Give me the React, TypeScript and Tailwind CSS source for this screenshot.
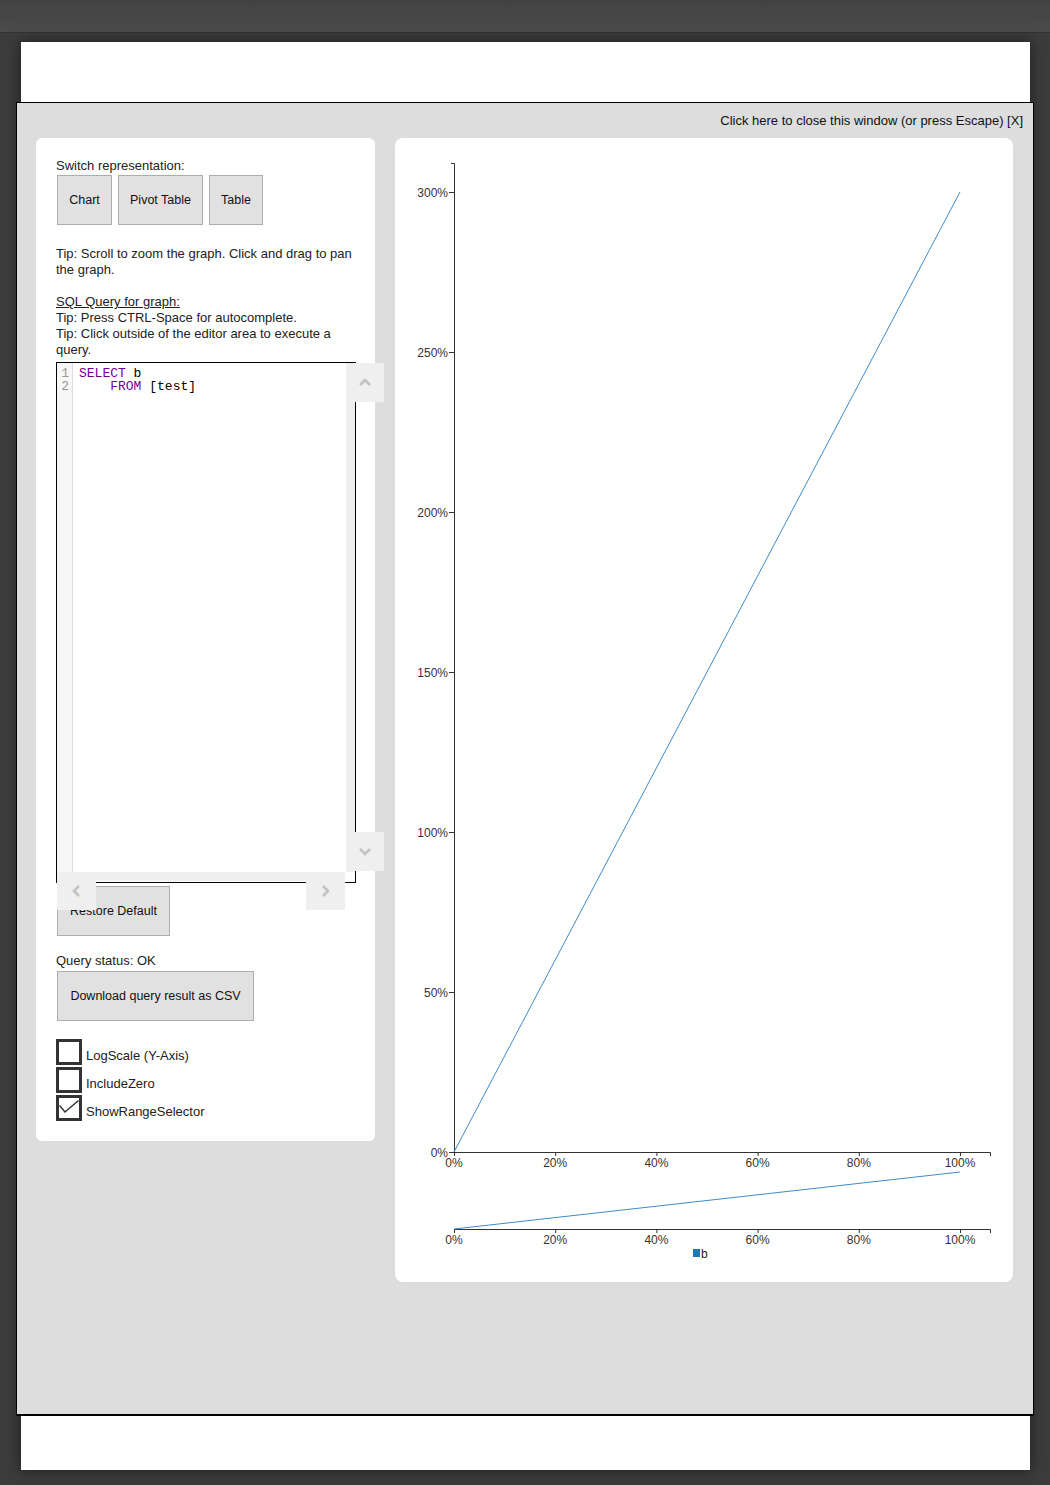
const yTicks = [0, 50, 100, 150, 200, 250, 300];
const xTicks = [0, 20, 40, 60, 80, 100];

const yPos = (v: number) => 1014 - v * 3.2;
const xPos = (v: number) => 59 + v * 5.06;

function Chevron({ dir }: { dir: 'up' | 'down' | 'left' | 'right' }) {
  const pts = {
    up: '1,8 6,3 11,8',
    down: '1,3 6,8 11,3',
    left: '8,1 3,6 8,11',
    right: '3,1 8,6 3,11',
  }[dir];
  return (
    <svg width="12" height="12" viewBox="0 0 12 12">
      <polyline points={pts} fill="none" stroke="#c2c2c2" strokeWidth="2.6" />
    </svg>
  );
}

function GrayButton({ children, className = '' }: { children: React.ReactNode; className?: string }) {
  return (
    <button className={`h-[50px] bg-[#e1e1e1] border border-[#adadad] text-[12.5px] text-[#111] text-center ${className}`}>
      {children}
    </button>
  );
}

function Check({ label, checked }: { label: string; checked?: boolean }) {
  return (
    <div className="flex items-end gap-[4px]">
      <div className="w-[26px] h-[26px] border-[3px] border-[#333] bg-white">
        {checked && (
          <svg width="20" height="20" viewBox="0 0 20 20">
            <polyline points="0.5,7.5 6,14 19.5,2.5" fill="none" stroke="#333" strokeWidth="1.5" />
          </svg>
        )}
      </div>
      <span className="leading-[16px] mb-[1px]">{label}</span>
    </div>
  );
}

function SqlEditor() {
  return (
    <div className="relative w-[300px] h-[521px] border border-black bg-white">
      {/* gutter */}
      <div className="absolute left-0 top-0 w-[16px] h-[509px] bg-[#f7f7f7] border-r border-[#dddddd]" />
      <div className="relative flex pt-[4px] font-['Liberation_Mono','Courier_New',monospace] text-[13px] leading-[13px]">
        <div className="w-[16px] pr-[4px] text-right text-[#999]">
          <div>1</div>
          <div>2</div>
        </div>
        <div className="pl-[6px] whitespace-pre text-black">
          <div>
            <span className="text-[#770088]">SELECT</span> b
          </div>
          <div>
            {'    '}
            <span className="text-[#770088]">FROM</span> [test]
          </div>
        </div>
      </div>
      {/* scrollbar tracks */}
      <div className="absolute right-0 top-0 w-[9px] h-[509px] bg-[#efefef]" />
      <div className="absolute left-0 top-[509px] w-[288px] h-[9px] bg-[#efefef]" />
      {/* scrollbar buttons */}
      <div className="absolute left-[289px] top-0 w-[38px] h-[39px] bg-[#efefef] flex items-center justify-center z-10">
        <Chevron dir="up" />
      </div>
      <div className="absolute left-[289px] top-[469px] w-[38px] h-[39px] bg-[#efefef] flex items-center justify-center z-10">
        <Chevron dir="down" />
      </div>
      <div className="absolute left-0 top-[509px] w-[39px] h-[38px] bg-[#efefef] flex items-center justify-center z-10">
        <Chevron dir="left" />
      </div>
      <div className="absolute left-[249px] top-[509px] w-[39px] h-[38px] bg-[#efefef] flex items-center justify-center z-10">
        <Chevron dir="right" />
      </div>
    </div>
  );
}

function Chart() {
  return (
    <svg width="618" height="1144" viewBox="0 0 618 1144" className="block">
      <g fontFamily="'Liberation Sans', Arial, sans-serif" fontSize="12" fill="#333">
        {/* y axis */}
        <path d="M56,25.5H59.5V1014.5" fill="none" stroke="#333" />
        {yTicks.map((v) => (
          <g key={`y${v}`}>
            <line x1="54" x2="59" y1={yPos(v) + 0.5} y2={yPos(v) + 0.5} stroke="#333" />
            <text x="53" y={yPos(v) + 5} textAnchor="end">
              {v}%
            </text>
          </g>
        ))}
        {/* x axis */}
        <path d="M59,1014.5H595.5V1018" fill="none" stroke="#333" />
        {xTicks.map((v) => (
          <g key={`x${v}`}>
            <line x1={xPos(v) + 0.5} x2={xPos(v) + 0.5} y1="1014" y2="1018" stroke="#333" />
            <text x={xPos(v)} y="1029" textAnchor="middle">
              {v}%
            </text>
          </g>
        ))}
        <line x1="59" y1="1014" x2="565" y2="54" stroke="#3d8bcb" strokeWidth="1" />

        {/* range selector */}
        <path d="M59,1091.5H595.5V1095" fill="none" stroke="#333" />
        {xTicks.map((v) => (
          <g key={`r${v}`}>
            <line x1={xPos(v) + 0.5} x2={xPos(v) + 0.5} y1="1091" y2="1095" stroke="#333" />
            <text x={xPos(v)} y="1106" textAnchor="middle">
              {v}%
            </text>
          </g>
        ))}
        <line x1="59" y1="1091" x2="565" y2="1034" stroke="#3d8bcb" strokeWidth="1" />

        {/* legend */}
        <rect x="298" y="1111" width="7" height="8" fill="#1f77b4" />
        <text x="306" y="1120" fill="#222">
          b
        </text>
      </g>
    </svg>
  );
}

export default function App() {
  return (
    <div className="min-h-[1485px] bg-[#3c3c3c] font-['Liberation_Sans',Arial,sans-serif] text-[13px] text-[#222]">
      <div className="h-[33px] bg-gradient-to-b from-[#424242] to-[#4b4b4b] border-b border-[#333]" />
      <div className="ml-[21px] mt-[9px] w-[1009px] bg-white shadow-[0_0_14px_rgba(0,0,0,0.55)] flex flex-col">
        <div className="h-[60px]" />
        <div className="-ml-[5px] w-[1018px] h-[1314px] bg-[#dddddd] border border-black border-b-2 flex flex-col">
          <div className="h-[35px] flex items-center justify-end pr-[10px] pt-[1px] text-[#111] leading-[16px]">
            Click here to close this window (or press Escape) [X]
          </div>
          <div className="flex items-start gap-[20px] pl-[19px]">
            {/* left controls */}
            <div className="w-[339px] bg-white rounded-[6px] pl-[20px] pr-[14px] pt-[20px] pb-[20px] leading-[16px]">
              <div>Switch representation:</div>
              <div className="flex gap-[6px] ml-[1px] mt-[1px]">
                <GrayButton className="w-[55px]">Chart</GrayButton>
                <GrayButton className="w-[85px]">Pivot Table</GrayButton>
                <GrayButton className="w-[54px]">Table</GrayButton>
              </div>
              <p className="mt-[21px]">Tip: Scroll to zoom the graph. Click and drag to pan the graph.</p>
              <div className="mt-[16px]">
                <span className="underline">SQL Query for graph:</span>
                <br />
                Tip: Press CTRL-Space for autocomplete.
                <br />
                Tip: Click outside of the editor area to execute a query.
              </div>
              <div className="mt-[4px]">
                <SqlEditor />
              </div>
              <GrayButton className="w-[113px] ml-[1px] mt-[3px] block">Restore Default</GrayButton>
              <div className="mt-[17px]">Query status: OK</div>
              <GrayButton className="w-[197px] ml-[1px] mt-[2px] block">Download query result as CSV</GrayButton>
              <div className="mt-[18px] flex flex-col gap-[2px]">
                <Check label="LogScale (Y-Axis)" />
                <Check label="IncludeZero" />
                <Check label="ShowRangeSelector" checked />
              </div>
            </div>
            {/* chart */}
            <div className="w-[618px] h-[1144px] bg-white rounded-[8px] overflow-hidden">
              <Chart />
            </div>
          </div>
        </div>
        <div className="h-[54px]" />
      </div>
    </div>
  );
}
